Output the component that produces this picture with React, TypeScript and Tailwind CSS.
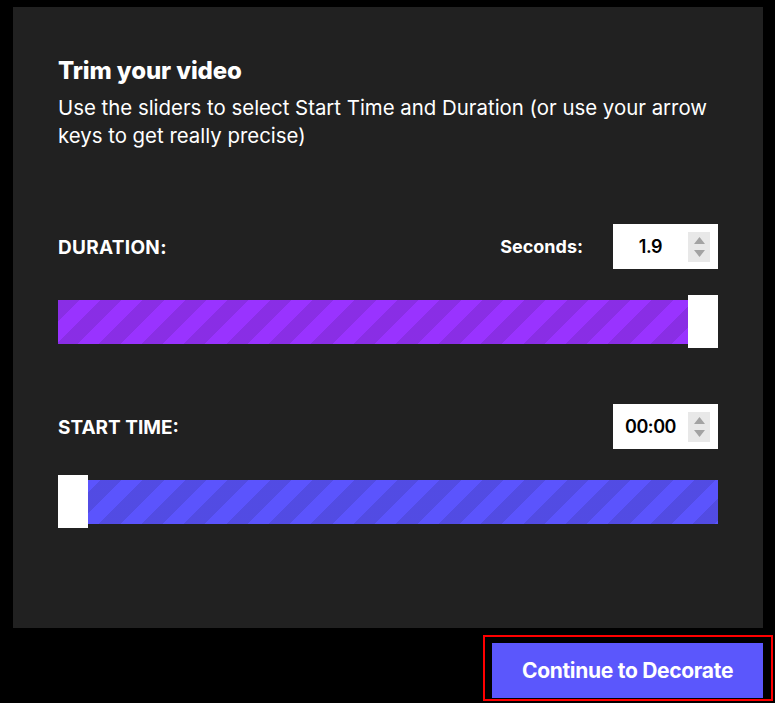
import { useState } from "react";

function Spinner() {
  return (
    <div className="flex flex-col items-center justify-center gap-[6px] w-[22px] h-[30px] bg-[#e8e8e8]">
      <svg width="11" height="7" viewBox="0 0 11 7">
        <path d="M5.5 0 L11 7 L0 7 Z" fill="#a3a3a3" />
      </svg>
      <svg width="11" height="7" viewBox="0 0 11 7">
        <path d="M0 0 L11 0 L5.5 7 Z" fill="#a3a3a3" />
      </svg>
    </div>
  );
}

function NumberBox({ value }: { value: string }) {
  return (
    <div className="flex items-center w-[105px] h-[45px] bg-white pr-[8px]">
      <span className="flex-1 text-center text-[18px] font-semibold text-black tracking-tight">
        {value}
      </span>
      <Spinner />
    </div>
  );
}

function Slider({ color, handle }: { color: string; handle: "left" | "right" }) {
  return (
    <div className="relative flex items-center h-[53px]">
      <div
        className={`w-full h-[44px] ${color}`}
        style={{
          backgroundImage:
            "repeating-linear-gradient(135deg, rgba(0,0,0,0.1) 0 15px, transparent 15px 30px)",
        }}
      />
      <div
        className={`absolute top-0 h-[53px] w-[30px] bg-white ${
          handle === "left" ? "left-0" : "right-0"
        }`}
      />
    </div>
  );
}

export default function App() {
  const [duration] = useState("1.9");
  const [start] = useState("00:00");

  return (
    <div className="w-[775px] h-[703px] bg-black pt-[7px] font-['Inter',sans-serif]">
      {/* Panel */}
      <div className="ml-[13px] w-[750px] h-[621px] bg-[#212121] px-[45px] pt-[50px]">
        <h2 className="text-[24px] leading-[28px] font-extrabold text-white tracking-[-0.1px]">
          Trim your video
        </h2>
        <p className="mt-[9px] text-[20.4px] leading-[28px] text-white">
          Use the sliders to select Start Time and Duration (or use your arrow
          keys to get really precise)
        </p>

        {/* Duration */}
        <div className="mt-[74px] flex items-center justify-between">
          <span className="mt-[3px] text-[19px] font-bold text-white tracking-[0.3px]">DURATION:</span>
          <div className="flex items-center gap-[30px]">
            <span className="text-[18px] font-bold text-white">Seconds:</span>
            <NumberBox value={duration} />
          </div>
        </div>
        <div className="mt-[26px]">
          <Slider color="bg-[#9933ff]" handle="right" />
        </div>

        {/* Start time */}
        <div className="mt-[56px] flex items-center justify-between">
          <span className="mt-[3px] text-[19px] font-bold text-white">START TIME:</span>
          <NumberBox value={start} />
        </div>
        <div className="mt-[26px]">
          <Slider color="bg-[#5b54fd]" handle="left" />
        </div>
      </div>

      {/* Footer */}
      <div className="flex justify-end mt-[7px] pr-[2px]">
        <div className="border-2 border-[#ff0000] pl-[7px] pr-[8px] pt-[6px] pb-[1px]">
          <button className="w-[271px] h-[55px] bg-[#5b57fc] text-white text-[21px] font-bold tracking-[-0.3px]">
            Continue to Decorate
          </button>
        </div>
      </div>
    </div>
  );
}
